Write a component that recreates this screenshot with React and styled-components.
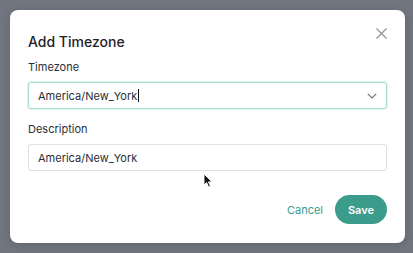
import React from "react"
import styled, { createGlobalStyle } from "styled-components"

const GlobalStyle = createGlobalStyle`
  html, body {
    margin: 0;
    padding: 0;
    background: #71757f;
    font-family: 'Inter', 'Liberation Sans', sans-serif;
  }
  * { box-sizing: border-box; }
`

export default function App() {
  return (
    <Page>
      <GlobalStyle />
      <Modal>
        <Header>
          <Title>Add Timezone</Title>
          <CloseButton aria-label="Close">
            <svg width="11" height="11" viewBox="0 0 11 11">
              <path d="M0.5 0.5 L10.5 10.5 M10.5 0.5 L0.5 10.5" stroke="#8c909b" strokeWidth="1.1" fill="none" />
            </svg>
          </CloseButton>
        </Header>

        <Field>
          <Label>Timezone</Label>
          <Control $focused>
            <Value>America/New_York<Caret /></Value>
            <svg width="10" height="6" viewBox="0 0 10 6">
              <path d="M0.8 0.8 L5 5 L9.2 0.8" stroke="#6f7480" strokeWidth="1.2" fill="none" />
            </svg>
          </Control>
        </Field>

        <Field $gap={12}>
          <Label>Description</Label>
          <Control>
            <Value>America/New_York</Value>
          </Control>
        </Field>

        <Actions>
          <CancelButton>Cancel</CancelButton>
          <SaveButton>Save</SaveButton>
        </Actions>

        <Pointer width="11" height="15" viewBox="0 0 11 15">
          <path d="M1 1 L1 12 L3.6 9.6 L5.6 14 L7.4 13.2 L5.5 8.9 L9 8.9 Z" fill="#111" stroke="#fff" strokeWidth="0.9" />
        </Pointer>
      </Modal>
    </Page>
  )
}

const Page = styled.div`
padding: 10px;
height: 253px;
`

const Modal = styled.div`
position: relative;
width: 395px;
height: 233px;
background: #fff;
border-radius: 8px;
padding: 22px 18px 19px 18px;
display: flex;
flex-direction: column;
box-shadow: 0 2px 8px rgba(0, 0, 0, 0.15);
`

const Header = styled.div`
display: flex;
justify-content: space-between;
align-items: flex-start;
height: 20px;
`

const Title = styled.h2`
margin: 0;
font-size: 14px;
line-height: 20px;
font-weight: 500;
color: #1e2228;
`

const CloseButton = styled.button`
border: none;
background: none;
padding: 0;
margin: -4px 0 0 0;
width: 11px;
height: 11px;
display: flex;
cursor: pointer;
`

const Field = styled.div`
display: flex;
flex-direction: column;
gap: 7px;
margin-top: ${p => p.$gap || 7}px;
`

const Label = styled.label`
font-size: 11px;
line-height: 16px;
color: #2b2f36;
`

const Control = styled.div`
height: 27px;
display: flex;
align-items: center;
justify-content: space-between;
padding: 0 9px 0 9px;
border: 1px solid ${p => (p.$focused ? "#a6dcd2" : "#dcdfe4")};
border-radius: 3px;
box-shadow: ${p => (p.$focused ? "0 0 0 1px rgba(166, 220, 210, 0.35)" : "none")};
`

const Value = styled.span`
font-size: 11px;
color: #2a2e35;
display: flex;
align-items: center;
`

const Caret = styled.span`
display: inline-block;
width: 1px;
height: 13px;
background: #111;
margin-left: 1px;
`

const Actions = styled.div`
margin-top: 24px;
display: flex;
justify-content: flex-end;
align-items: center;
gap: 12px;
`

const CancelButton = styled.button`
border: none;
background: none;
padding: 0;
font-family: inherit;
font-size: 11px;
font-weight: 400;
color: #3a9b8a;
cursor: pointer;
`

const SaveButton = styled.button`
border: none;
width: 52px;
height: 29px;
border-radius: 15px;
background: #3c9c8c;
color: #fff;
font-family: inherit;
font-size: 11px;
font-weight: 600;
cursor: pointer;
`

const Pointer = styled.svg`
position: absolute;
left: 193px;
top: 163px;
`
